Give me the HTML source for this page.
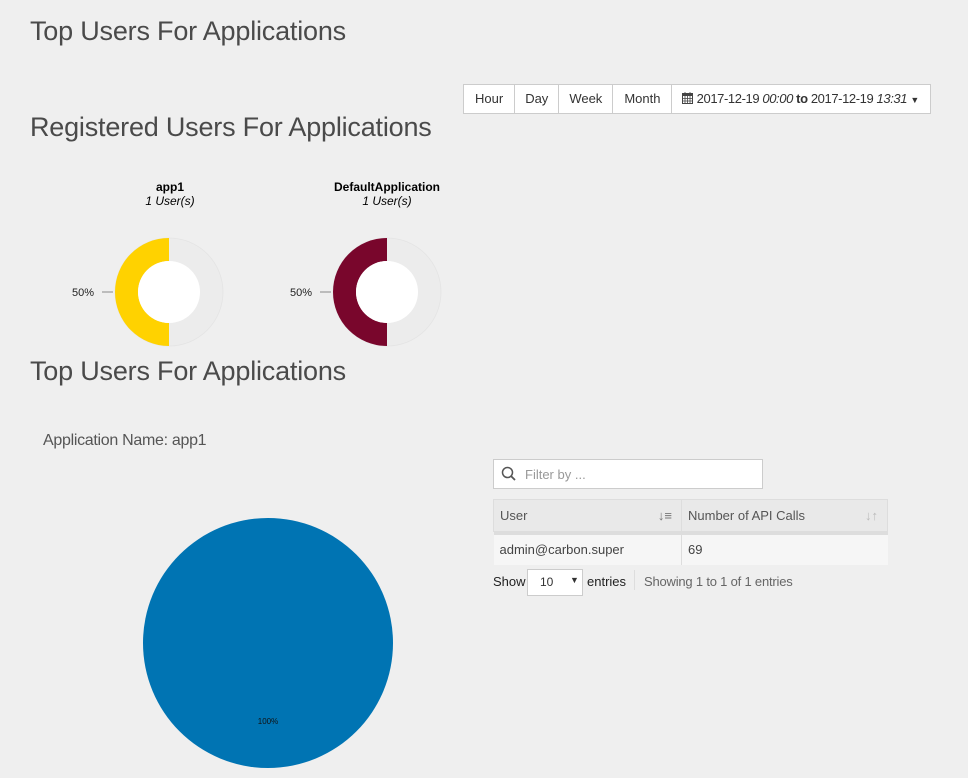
<!DOCTYPE html>
<html><head><meta charset="utf-8"><style>
body{margin:0;width:968px;height:778px;background:#efefef;font-family:"Liberation Sans",sans-serif;color:#333;position:relative;overflow:hidden}
.a{position:absolute;white-space:nowrap}
.h{font-size:27px;font-weight:300;color:#4a4a4a;letter-spacing:-0.2px}
.btns{position:absolute;left:463px;top:84px;height:28px;display:flex;border:1px solid #ccc;background:#fff;font-size:13px;color:#333}
.btns div{padding:0 10px;line-height:28px;border-right:1px solid #ccc}
.btns div:last-child{border-right:none}
table{border-collapse:collapse;font-size:13px}
</style></head><body>
<div class="a h" style="left:30px;top:16px">Top Users For Applications</div>
<div class="btns"><div style="padding:0 11px">Hour</div><div>Day</div><div>Week</div><div style="padding:0 11px">Month</div><div style="padding-left:10px;padding-right:11px;letter-spacing:-0.4px">
<svg width="11" height="12" viewBox="0 0 11 12" style="vertical-align:-1px"><rect x="0.5" y="1.5" width="10" height="10" fill="none" stroke="#444"/><rect x="0.5" y="1.5" width="10" height="2.5" fill="#444"/><path d="M3 0v3M8 0v3M0.5 6.5h10M0.5 9h10M3 4v7M5.5 4v7M8 4v7" stroke="#444" stroke-width="0.8"/></svg>
2017-12-19 <i>00:00</i> <b>to</b> 2017-12-19 <i>13:31</i> <span style="font-size:9px">▼</span></div></div>
<div class="a h" style="left:30px;top:112px">Registered Users For Applications</div>

<div class="a" style="left:120px;top:180px;width:100px;text-align:center;font-size:12px;color:#000"><b>app1</b><br><i>1 User(s)</i></div>
<div class="a" style="left:312px;top:180px;width:150px;text-align:center;font-size:12px;color:#000"><b>DefaultApplication</b><br><i>1 User(s)</i></div>
<svg class="a" style="left:0;top:0" width="968" height="778">
<circle cx="169" cy="292" r="42.5" fill="none" stroke="#ececec" stroke-width="23"/>
<circle cx="169" cy="292" r="54" fill="none" stroke="#e4e4e4" stroke-width="0.8"/>
<path d="M169 238 A54 54 0 0 0 169 346 L169 323 A31 31 0 0 1 169 261Z" fill="#ffd200"/>
<circle cx="169" cy="292" r="31" fill="#fff"/>
<line x1="102" y1="292" x2="113" y2="292" stroke="#888"/>
<text x="72" y="296" font-size="11" fill="#222" font-family="Liberation Sans">50%</text>
<circle cx="387" cy="292" r="42.5" fill="none" stroke="#ececec" stroke-width="23"/>
<circle cx="387" cy="292" r="54" fill="none" stroke="#e4e4e4" stroke-width="0.8"/>
<path d="M387 238 A54 54 0 0 0 387 346 L387 323 A31 31 0 0 1 387 261Z" fill="#79062c"/>
<circle cx="387" cy="292" r="31" fill="#fff"/>
<line x1="320" y1="292" x2="331" y2="292" stroke="#888"/>
<text x="290" y="296" font-size="11" fill="#222" font-family="Liberation Sans">50%</text>
<circle cx="268" cy="643" r="125" fill="#0074b3"/>
<text x="268" y="724" font-size="8" fill="#111" text-anchor="middle" font-family="Liberation Sans">100%</text>
</svg>

<div class="a h" style="left:30px;top:356px">Top Users For Applications</div>
<div class="a" style="left:43px;top:432px;font-size:16px;font-weight:300;color:#555;letter-spacing:-0.3px">Application Name: app1</div>

<div class="a" style="left:493px;top:459px;width:268px;height:28px;background:#fff;border:1px solid #ccc">
<svg class="a" style="left:7px;top:6px" width="16" height="16" viewBox="0 0 16 16"><circle cx="6.5" cy="6.5" r="5" fill="none" stroke="#555" stroke-width="1.5"/><path d="M10.2 10.2L14 14" stroke="#555" stroke-width="1.8"/></svg>
<span class="a" style="left:31px;top:7px;font-size:13px;color:#999">Filter by ...</span></div>

<table class="a" style="left:493px;top:499px;width:395px">
<tr style="background:#e9e9e9;height:32px;color:#555"><td style="border:1px solid #ddd;padding-left:6px;width:180px">User<span style="float:right;margin-right:8px;color:#777">↓≡</span></td><td style="border:1px solid #ddd;padding-left:6px">Number of API Calls<span style="float:right;margin-right:8px;color:#bbb">↓↑</span></td></tr>
<tr style="height:3px;background:#ddd"><td colspan="2" style="padding:0"></td></tr>
<tr style="background:#f6f6f6;height:30px;color:#444"><td style="padding-left:6px;border-right:1px solid #ddd">admin@carbon.super</td><td style="padding-left:6px">69</td></tr>
</table>

<div class="a" style="left:493px;top:574px;font-size:13px;color:#222">Show</div>
<div class="a" style="left:527px;top:569px;width:54px;height:25px;background:#fff;border:1px solid #ccc;font-size:12px"><span class="a" style="left:12px;top:5px">10</span><span class="a" style="left:42px;top:5px;font-size:9px">▼</span></div>
<div class="a" style="left:587px;top:574px;font-size:13px;color:#222">entries</div>
<div class="a" style="left:634px;top:570px;width:1px;height:20px;background:#ddd"></div>
<div class="a" style="left:644px;top:574px;font-size:13px;color:#666;letter-spacing:-0.2px">Showing 1 to 1 of 1 entries</div>
</body></html>
